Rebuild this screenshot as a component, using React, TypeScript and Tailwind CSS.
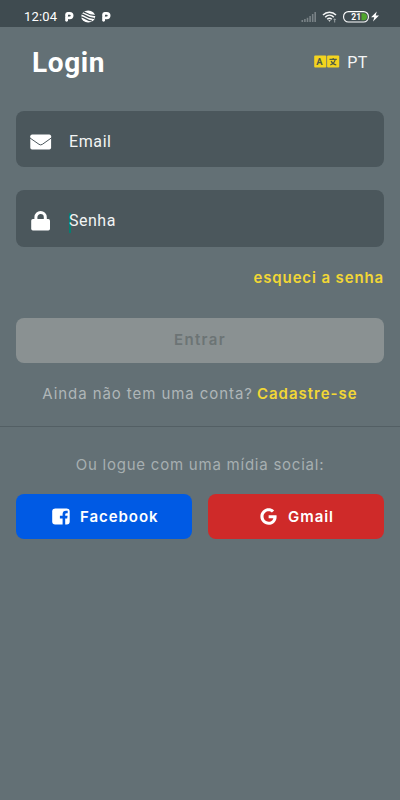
import React from "react";
import { FaGoogle } from "react-icons/fa";

function PMark() {
  return (
    <svg width="11" height="12" viewBox="0 0 11 12" fill="none" stroke="#fff">
      <path d="M2.6 6.6V9.3" strokeWidth="2.8" strokeLinecap="round" />
      <path d="M2.6 5V3.4Q2.6 2.3 3.6 2.3H5.8A2.3 2.3 0 0 1 5.8 6.9H4.8" strokeWidth="2.8" strokeLinecap="round" />
    </svg>
  );
}

function StatusBar() {
  return (
    <header className="flex h-[27px] items-start bg-[#3f4b50] pl-6 pr-[21px] pt-[10px] text-white">
      <span className="w-[40px] whitespace-nowrap text-[13px] leading-[14px] tracking-[0.2px] [font-family:Roboto,sans-serif]">12:04</span>
      <span className="mt-px"><PMark /></span>
      <svg className="ml-[6px] shrink-0" width="15" height="13" viewBox="0 0 15 13">
        <ellipse cx="7.2" cy="6.5" rx="7" ry="6" fill="#fff" />
        <g fill="none" stroke="#3f4b50" strokeWidth="1.2">
          <path d="M2.5 1.8C5.5 2.5 7 6 14.5 5.4" />
          <path d="M0.3 3.8C4 4 6.5 8.8 13.5 8.4" />
          <path d="M0 6.8C3.5 7 6 11 11 11" />
        </g>
      </svg>
      <span className="ml-[5px] mt-px"><PMark /></span>
      <svg className="ml-auto mt-[2px] shrink-0" width="16" height="11" viewBox="0 0 16 11" fill="#798286">
        <rect x="0.5" y="8" width="1.6" height="2" />
        <rect x="3.1" y="7" width="1.6" height="3" />
        <rect x="5.7" y="5.8" width="1.6" height="4.2" />
        <rect x="8.3" y="4" width="1.6" height="6" />
        <rect x="10.9" y="2" width="1.6" height="8" />
        <rect x="13.4" y="0" width="1.6" height="10" />
      </svg>
      <svg className="ml-[5px] mt-[1px] shrink-0" width="16" height="12" viewBox="0 0 16 12" fill="none" stroke="#f4f5f5" strokeWidth="1.5">
        <path d="M1 4C4.5.3 10.5.3 14 4" />
        <path d="M3.2 6.2C5.7 3.7 9.3 3.7 11.8 6.2" />
        <path d="M5.2 8.3C6.8 6.9 8.2 6.9 9.8 8.3" />
        <path d="M6.2 9.3h2.6L7.5 10.8z" fill="#f4f5f5" stroke="none" />
        <path d="M12.7 7.5v4M11.6 8.5h2.2" stroke="#9ba3a5" strokeWidth="1" />
      </svg>
      <svg className="ml-[5px] mt-[1px] shrink-0" width="26" height="12" viewBox="0 0 26 12">
        <rect x="0.6" y="0.6" width="24.8" height="10.4" rx="4.8" fill="none" stroke="#fff" strokeWidth="1.1" />
        <path d="M18.5 2.3H20.5A3.5 3.5 0 0 1 20.5 9.3H18.5Z" fill="#50a52d" />
        <text x="13.2" y="9" textAnchor="middle" fontFamily="Roboto, sans-serif" fontWeight="700" fontSize="8.5" fill="#fff">21</text>
      </svg>
      <svg className="ml-[2px] mt-[1px] shrink-0" width="8" height="11" viewBox="0 0 8 11">
        <path d="M5.8 0.5L0.1 6.3H3.3L2 10.5L8 4.6H4.7Z" fill="#fff" />
      </svg>
    </header>
  );
}

function TranslateIcon() {
  return (
    <svg width="26" height="13" viewBox="0 0 26 13">
      <rect x="0.2" y="0.4" width="12.1" height="12" rx="1" fill="#f4d41f" />
      <rect x="13.1" y="0.4" width="12.1" height="12" rx="1" fill="#f4d41f" />
      <text x="5.7" y="9.7" textAnchor="middle" fontFamily="Roboto, sans-serif" fontWeight="700" fontSize="9.5" fill="#4f5c45">A</text>
      <path d="M15.5 4.4H22.8M19.2 3V4.4M21.2 4.6C20.7 7.2 18.7 9 16.3 10M17.1 6C18 8.1 19.9 9.4 22.3 10" fill="none" stroke="#4f5c45" strokeWidth="1.2" />
    </svg>
  );
}

export default function App() {
  return (
    <main className="h-[800px] w-[400px] overflow-hidden bg-[#637075] [font-family:Inter,sans-serif]">
      <StatusBar />
      <div className="flex h-[84px] items-start justify-between pl-[32px] pr-[32px] pt-[19px] [font-family:Roboto,sans-serif]">
        <h1 className="text-[28px] font-bold leading-[34px] tracking-[0.6px] text-white">Login</h1>
        <div className="flex items-center gap-[7px] pt-[7px] text-[16px] leading-[20px] tracking-[0.6px] text-[#f4f5f6]">
          <span className="-mt-[4px]"><TranslateIcon /></span>
          <span>PT</span>
        </div>
      </div>

      <form className="px-4">
        <label className="flex h-[56px] items-center rounded-lg bg-[#4b575c] pl-[14px] pt-[5px] text-[16px] tracking-[0.6px] text-[#f2f4f4] [font-family:Roboto,sans-serif]">
          <svg width="22" height="16" viewBox="0 0 22 16">
            <rect x="0.3" y="0.5" width="20.8" height="15" rx="1.8" fill="#fff" />
            <path d="M0 4L9 10.3Q10.7 11.5 12.4 10.3L21.3 4" fill="none" stroke="#4b575c" strokeWidth="1" />
          </svg>
          <span className="ml-[17px] pt-px">Email</span>
        </label>
        <label className="mt-[23px] flex h-[57px] items-center rounded-lg bg-[#4b575c] pl-[15px] pt-[5px] text-[16px] tracking-[0.5px] text-[#f2f4f4] [font-family:Roboto,sans-serif]">
          <svg width="20" height="20" viewBox="0 0 20 20">
            <rect x="0.2" y="8" width="18.8" height="11.4" rx="1.7" fill="#fff" />
            <path d="M4.9 9V6.2A4.7 4.7 0 0 1 14.3 6.2V9" fill="none" stroke="#fff" strokeWidth="3" />
          </svg>
          <span className="ml-[18px] mt-[4px] h-[20px] w-[2px] bg-[#087e71]" />
          <span className="-ml-[2px]">Senha</span>
        </label>
        <a className="mt-[21px] block h-[50px] text-right text-[15px] font-semibold leading-[20px] tracking-[0.87px] text-[#f2d735]">esqueci a senha</a>
        <button type="button" disabled className="flex h-[45px] w-full items-center justify-center rounded-lg bg-[#8a9192] text-[15px] font-semibold tracking-[1.35px] text-[#6c7475]">Entrar</button>
      </form>

      <p className="flex h-[64px] justify-center gap-1 whitespace-nowrap border-b border-[#535f64] pt-[21px] text-[15px] leading-[20px] text-[#afb6b8]">
        <span className="tracking-[0.93px]">Ainda não tem uma conta?</span>
        <a className="font-semibold tracking-[1px] text-[#f2d735]">Cadastre-se</a>
      </p>
      <p className="h-[67px] pt-[28px] text-center text-[15px] leading-[20px] tracking-[0.77px] text-[#a7afb1]">Ou logue com uma mídia social:</p>
      <div className="grid grid-cols-2 gap-4 px-4 text-[15px] font-semibold tracking-[0.95px] text-white">
        <button type="button" className="flex h-[45px] items-center rounded-lg bg-[#005ae4] pl-[36px]">
          <svg width="18" height="17" viewBox="0 0 18 17">
            <rect x="0.2" y="0.5" width="17.5" height="16" rx="3" fill="#fff" />
            <path d="M10.6 17V10.6H7.9V7.8H10.6V6.1Q10.6 2.7 14 2.7H15.7V5.3H14.6Q13.2 5.3 13.2 6.6V7.8H15.6L15.2 10.6H13.2V17Z" fill="#005ae4" />
          </svg>
          <span className="ml-[10px] pt-px">Facebook</span>
        </button>
        <button type="button" className="flex h-[45px] items-center rounded-lg bg-[#cf2a29] pl-[52px]">
          <FaGoogle size={17} />
          <span className="ml-[11px] pt-px">Gmail</span>
        </button>
      </div>
    </main>
  );
}
